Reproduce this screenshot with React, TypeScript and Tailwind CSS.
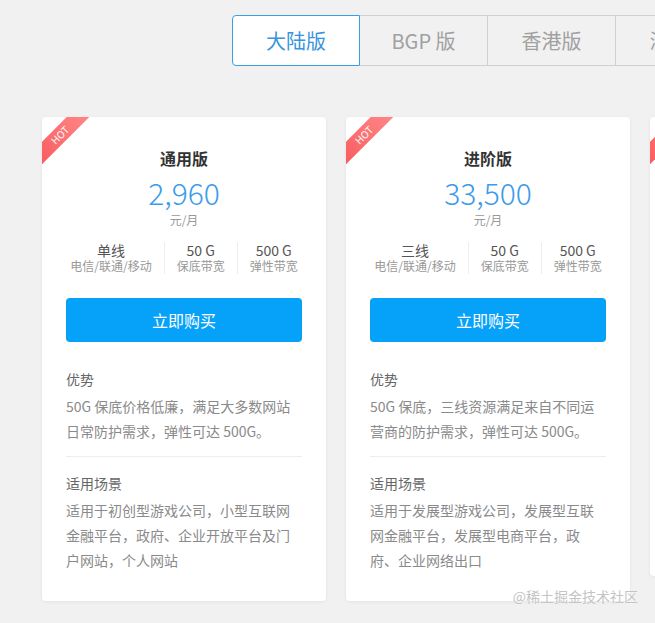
import React from 'react';

const tabs = ['大陆版', 'BGP 版', '香港版', '海外版'];

const plans = [
  {
    name: '通用版',
    price: '2,960',
    line: '单线',
    advantage: '50G 保底价格低廉，满足大多数网站日常防护需求，弹性可达 500G。',
    scene: '适用于初创型游戏公司，小型互联网金融平台，政府、企业开放平台及门户网站，个人网站',
  },
  {
    name: '进阶版',
    price: '33,500',
    line: '三线',
    advantage: '50G 保底，三线资源满足来自不同运营商的防护需求，弹性可达 500G。',
    scene: '适用于发展型游戏公司，发展型互联网金融平台，发展型电商平台，政府、企业网络出口',
  },
  {
    name: '旗舰版',
    price: '98,000',
    line: '三线',
    advantage: '100G 保底，三线资源满足来自不同运营商的防护需求，弹性可达 1000G。',
    scene: '适用于大型游戏公司，大型互联网金融平台，大型电商平台',
  },
];

const font = { fontFamily: '"Noto Sans CJK SC", "Open Sans", sans-serif' };

function PlanCard({ plan }: { plan: (typeof plans)[number] }) {
  return (
    <div className="relative w-[284px] shrink-0 overflow-hidden rounded bg-white px-6 pt-[30px] pb-[28px] shadow-[0_1px_4px_rgba(0,0,0,0.06)]">
      <div className="absolute left-[-22px] top-[10px] flex h-4 w-20 -rotate-45 items-center justify-center bg-gradient-to-r from-[#f7575c] to-[#ff8a8a]">
        <span className="text-[10px] leading-none text-white">HOT</span>
      </div>
      <h3 className="text-center text-[16px] font-bold leading-[22px] text-[#333]">{plan.name}</h3>
      <div className="mt-[8px] text-center text-[30px] font-light leading-[30px] text-[#3d9be9]">{plan.price}</div>
      <div className="mt-[5px] text-center text-[12px] leading-4 text-[#999]">元/月</div>
      <div className="mt-[14px] flex justify-center whitespace-nowrap">
        <div className="px-3 text-center">
          <div className="text-[14px] leading-4 text-[#555]">{plan.line}</div>
          <div className="text-[12px] leading-4 text-[#999]">电信/联通/移动</div>
        </div>
        <div className="border-l border-[#eee] px-3 text-center">
          <div className="text-[14px] leading-4 text-[#555]">50 G</div>
          <div className="text-[12px] leading-4 text-[#999]">保底带宽</div>
        </div>
        <div className="border-l border-[#eee] px-3 text-center">
          <div className="text-[14px] leading-4 text-[#555]">500 G</div>
          <div className="text-[12px] leading-4 text-[#999]">弹性带宽</div>
        </div>
      </div>
      <button className="mt-6 flex h-11 w-full items-center justify-center rounded bg-[#06a2fa] text-[16px] text-white">
        立即购买
      </button>
      <div className="mt-[27px] text-[14px] leading-5 text-[#666]">优势</div>
      <p className="mt-[5px] text-[14px] leading-[25px] text-[#8a8a8a]">{plan.advantage}</p>
      <div className="mt-3 h-px bg-[#eee]" />
      <div className="mt-4 text-[14px] leading-5 text-[#666]">适用场景</div>
      <p className="mt-[5px] text-[14px] leading-[25px] text-[#8a8a8a]">{plan.scene}</p>
    </div>
  );
}

export default function App() {
  return (
    <div className="relative h-[623px] w-[655px] overflow-hidden bg-[#f1f1f1]" style={font}>
      <div className="ml-[232px] mt-[15px] flex">
        {tabs.map((tab, i) => (
          <div
            key={tab}
            className={`flex h-[51px] w-[128px] shrink-0 items-center justify-center text-[20px] ${
              i === 0
                ? 'rounded-l border border-[#3c9fe6] bg-white text-[#3a94dd]'
                : 'border border-l-0 border-[#d0d0d0] text-[#a0a0a0]'
            }`}
          >
            {tab}
          </div>
        ))}
      </div>
      <div className="ml-[42px] mt-[51px] flex items-start gap-5">
        {plans.map((plan) => (
          <PlanCard key={plan.name} plan={plan} />
        ))}
      </div>
      <div className="absolute bottom-[16px] right-[17px] text-[14px] text-[#c4c4c4] [text-shadow:0_0_2px_#fff]">
        @稀土掘金技术社区
      </div>
    </div>
  );
}
